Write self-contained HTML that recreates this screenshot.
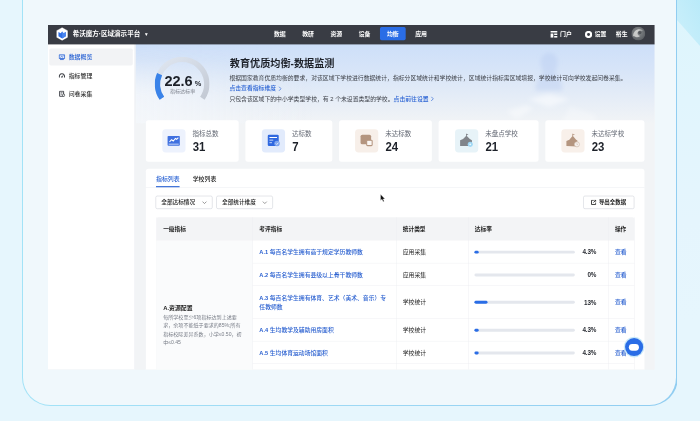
<!DOCTYPE html>
<html lang="zh-CN">
<head>
<meta charset="utf-8">
<title>教育优质均衡-数据监测</title>
<style>
*{box-sizing:border-box;margin:0;padding:0}
html,body{width:700px;height:421px;overflow:hidden}
body{position:relative;background:#e6f6fd;font-family:"Liberation Sans","Noto Sans CJK SC",sans-serif;color:#222}
.frame{position:absolute;left:22.4px;top:-40px;width:655.7px;height:446.1px;border:solid transparent;border-width:0 2px 1.8px 1.5px;border-radius:0 0 28.5px 28.5px;background:linear-gradient(#f0f8fc,#f0f8fc) padding-box,linear-gradient(90deg,#a3e3f7 0,#9dd8f4 50%,#90cdf1 100%) border-box}
.rpanel{position:absolute;left:677px;top:0;width:23px;height:421px;background:linear-gradient(180deg,#ddf5fc 0,#e1f5fd 100px,#e5f5fd 220px,#e6f6fd 320px)}
.rpanel svg{position:absolute;left:0;top:0;width:23px;height:60px}
.app{position:absolute;left:47.6px;top:25px;width:1438px;height:817px;transform:scale(.42181);transform-origin:0 0;background:#f2f4f6;overflow:hidden;font-size:14px}
.topbar{position:absolute;left:0;top:0;width:1440px;height:45.5px;z-index:5;background:#393c44;color:#fff}
.logo{position:absolute;left:16px;top:4px;width:35px;height:35px}
.title{position:absolute;left:58.5px;top:0;line-height:44px;font-size:15.5px;font-weight:700;white-space:nowrap}
.title b{font-size:11px;margin-left:9px;position:relative;top:-1.5px}
.nav{position:absolute;top:5px;height:31px;width:61px;border-radius:4px;text-align:center;line-height:31px;font-weight:700;font-size:14px}
.nav.on{background:#2a6de6}
.tr{position:absolute;top:0;line-height:44px;font-size:14px;font-weight:700;white-space:nowrap}
.side{position:absolute;left:0;top:44px;width:205.5px;height:773px;background:#fff;border-right:1.5px solid #e6eaf1;z-index:2}
.mi{position:absolute;left:3px;width:198px;height:40px;border-radius:4px;line-height:40px;padding-left:46px;font-size:14px;color:#333;font-weight:500}
.mi.on{background:#f2f3f5;color:#2a63d4}
.mi svg{position:absolute;left:22px;top:12px;width:16px;height:16px}
.main{position:absolute;left:208px;top:44px;width:1232px;height:773px;background:#f2f4f6}
.hero{position:absolute;left:0;top:0;width:1232px;height:190px;background:linear-gradient(180deg,#cddff9 0,#d6e4f8 30%,#e4ecf7 65%,#f2f4f6 100%)}
.hero:after{content:"";position:absolute;left:0;top:0;width:420px;height:190px;background:linear-gradient(90deg,rgba(244,247,251,.8),rgba(244,247,251,0));-webkit-mask-image:linear-gradient(180deg,rgba(0,0,0,0) 0,rgba(0,0,0,.1) 20%,#000 65%);mask-image:linear-gradient(180deg,rgba(0,0,0,0) 0,rgba(0,0,0,.1) 20%,#000 65%)}
.gauge{position:absolute;left:45px;top:31px;width:130px;height:130px}
.gnum{position:absolute;left:68px;top:70px;font-size:35.5px;font-weight:700;color:#1d2129;line-height:37.6px;white-space:nowrap;transform:scaleX(.97);transform-origin:0 0}
.gnum small{font-size:18px;margin-left:5px}
.glab{position:absolute;left:81px;top:105px;font-size:12px;color:#80858f;line-height:16px;white-space:nowrap}
h1{position:absolute;left:223px;top:30px;font-size:24px;line-height:34px;font-weight:700;color:#1d2129;white-space:nowrap}
.desc{position:absolute;left:222px;top:70px;font-size:13.85px;line-height:24px;color:#3d4048;white-space:nowrap}
.desc a{color:#2a63d4;font-weight:500}
.card{position:absolute;top:182px;height:98px;background:#fff;border-radius:6px}
.card .ib{position:absolute;left:39px;top:21px;width:55px;height:55px;border-radius:8px}
.card .ib svg{position:absolute;left:0;top:0;width:55px;height:55px}
.card .lb{position:absolute;left:110.5px;top:20px;font-size:15.5px;color:#636873;line-height:22px;white-space:nowrap}
.card .nm{position:absolute;left:110.5px;top:45.5px;font-size:30px;font-weight:700;color:#1d2129;line-height:34px;transform:scaleX(.9);transform-origin:0 0}
.panel{position:absolute;left:24px;top:297px;width:1182px;height:600px;background:#fff;border-radius:6px 6px 0 0}
.tab{position:absolute;top:12px;font-size:14px;line-height:22px;color:#222;font-weight:500}
.tab.on{color:#2a63d4}
.tab.on:after{content:"";position:absolute;left:0;right:0;top:29px;height:2.5px;background:#2a63d4}
.tline{position:absolute;left:0;top:43.5px;width:1182px;height:1px;background:#e8eaee}
.sel{position:absolute;top:63.5px;height:31px;border:1px solid #bfc4cc;border-radius:4px;font-size:13.4px;line-height:29px;padding-left:13px;color:#222;font-weight:500;background:#fff}
.sel svg{position:absolute;right:11px;top:8px;width:14px;height:14px}
.tbl{position:absolute;left:24px;top:115px;width:1135px;height:500px;border-left:1px solid #ebedf0;border-right:1px solid #ebedf0}
.th{position:absolute;left:0;top:0;width:1133px;height:55px;background:#f3f4f6;border-radius:4px 4px 0 0}
.th span{position:absolute;top:1.5px;line-height:54px;font-weight:700;font-size:13.5px;color:#222}
.vl{position:absolute;top:0;width:1px;height:500px;background:#ebedf0}
.hl{position:absolute;left:228px;width:905px;height:1px;background:#ebedf0}
.c1{position:absolute;left:0;top:54px;width:228px;height:446px;background:#fafbfc}
.c{position:absolute;font-size:13.8px;line-height:22px;white-space:nowrap;color:#222}
.lk{color:#2a60d0;font-weight:500}
.lk b{font-weight:700;font-size:13.4px}
.bar{position:absolute;left:754px;width:238px;height:7px;border-radius:3.5px;margin-top:-.5px;background:#e4e7ed}
.bar i{position:absolute;left:0;top:0;height:7px;border-radius:3.5px;background:#2a6de6}
.pct{position:absolute;left:992px;width:51px;text-align:right;font-size:15px;line-height:22px;color:#2b2e35;font-weight:700;letter-spacing:-.3px}
.fab{position:absolute;left:1159.5px;top:698px;width:43px;height:43px;border-radius:50%;background:#2a6de6;box-shadow:0 0 0 3px #c9e9f9}
.fab i{position:absolute;left:9.5px;top:13.5px;width:24px;height:16px;border-radius:8px;background:#fff}
.card.s1>*{margin-left:-1px}
</style>
</head>
<body>
<div class="frame"></div>
<div class="rpanel"><svg viewBox="0 0 23 60"><defs><linearGradient id="rg" x1="0" y1="1" x2="1" y2="0"><stop offset="0" stop-color="#cdf0fb"/><stop offset="1" stop-color="#b9eaf9"/></linearGradient></defs><path d="M0 0H23V46L0 20z" fill="url(#rg)"/></svg></div>

<div class="app">
  <div class="topbar">
    <svg class="logo" viewBox="0 0 30 30"><path d="M15 1.200 26.800 8v14L15 28.800 3.200 22V8z" fill="#fff" stroke="#22252b" stroke-width=".8"/><path d="M7.500 11 12 13.500 15 10l3 3.500L22.500 11v8.500L15 24l-7.500-4.500z" fill="#2f6fe6"/><path d="M15 10l3 3.500L22.500 11v8.500L15 24z" fill="#4a85ee"/></svg>
    <div class="title">希沃魔方·区域演示平台<b>▼</b></div>
    <div class="nav" style="left:519px">数据</div>
    <div class="nav" style="left:586px">教研</div>
    <div class="nav" style="left:653px">资源</div>
    <div class="nav" style="left:720px">设备</div>
    <div class="nav on" style="left:787px">均衡</div>
    <div class="nav" style="left:854px">应用</div>
    <svg style="position:absolute;left:1191px;top:14px;width:17px;height:16px" viewBox="0 0 17 16"><path d="M0 0h17v4H0zM0 6h7v10H0zM9 6h8v4H9zM9 12h8v4H9z" fill="#fff"/></svg>
    <div class="tr" style="left:1214px">门户</div>
    <svg style="position:absolute;left:1273px;top:13.500px;width:17px;height:17px" viewBox="0 0 17 17"><circle cx="8.5" cy="8.5" r="6" fill="none" stroke="#fff" stroke-width="5"/></svg>
    <div class="tr" style="left:1296px">设置</div>
    <div class="tr" style="left:1346px">裕生</div>
    <svg style="position:absolute;left:1383px;top:3.500px;width:33px;height:33px" viewBox="0 0 33 33"><defs><radialGradient id="av" cx=".45" cy=".4" r=".75"><stop offset="0" stop-color="#8c8f91"/><stop offset=".6" stop-color="#686c70"/><stop offset="1" stop-color="#4d5156"/></radialGradient></defs><circle cx="16.500" cy="16.500" r="16.500" fill="url(#av)"/><path d="M4 21c1-9 7-15 15-15 4 0 7 2 8 4-5-2-10-1-12 3s1 8 6 9c-4 3-9 4-12 2s-5-1-5-3z" fill="#e8e8e6" opacity=".7"/><circle cx="20" cy="14" r="4" fill="#3f4347" opacity=".7"/></svg>
  </div>

  <div class="side">
    <div class="mi on" style="top:12px"><svg viewBox="0 0 16 16"><path d="M1.500 2.800h13v8.700h-13z" fill="#dfe8fb" stroke="#2a63d4" stroke-width="2"/><path d="M3.500 14h9" stroke="#2a63d4" stroke-width="2"/><path d="M4.500 8.800l2.500-2.300 2 1.500 2.500-2.500" fill="none" stroke="#2a63d4" stroke-width="1.700"/></svg>数据概览</div>
    <div class="mi" style="top:55.5px"><svg viewBox="0 0 16 16"><path d="M2.200 12.500a6.300 6.300 0 1 1 11.600 0" fill="none" stroke="#3c3f45" stroke-width="2.600"/><path d="M8 11.500l2.500-4" stroke="#3c3f45" stroke-width="2"/><circle cx="8" cy="11.500" r="1.800" fill="#3c3f45"/></svg>指标管理</div>
    <div class="mi" style="top:98.5px"><svg viewBox="0 0 16 16"><path d="M2.500 2h9.500v12h-9.500z" fill="none" stroke="#3c3f45" stroke-width="2.200"/><path d="M5 5.700h4.500M5 9h3" stroke="#3c3f45" stroke-width="1.800"/><circle cx="12" cy="11.500" r="2.800" fill="#fff" stroke="#3c3f45" stroke-width="1.800"/></svg>问卷采集</div>
  </div>

  <div class="main">
    <div class="hero"><svg style="position:absolute;left:0;top:0;width:1232px;height:190px" viewBox="0 0 1232 190"><defs><filter id="bl" x="-20%" y="-20%" width="140%" height="140%"><feGaussianBlur stdDeviation="5"/></filter></defs><g filter="url(#bl)"><path d="M980 22c14 0 22 12 20 28l-6 22c12 8 18 22 18 40h-64c0-18 6-32 18-40l-6-22c-2-16 6-28 20-28z" fill="#b4c9ee" opacity=".38"/><path d="M930 132l50-12 48 12-48 18z" fill="#fff" opacity=".5"/><path d="M880 160l46-14 16 8-40 24z" fill="#fff" opacity=".4"/><path d="M1030 150l60 20v18h-80z" fill="#fff" opacity=".25"/></g></svg></div>
    <svg class="gauge" viewBox="0 0 130 130">
      <defs><linearGradient id="tg" x1="0" y1="0" x2="1" y2="1"><stop offset="0" stop-color="#dfe6f0"/><stop offset=".45" stop-color="#d3dae5"/><stop offset="1" stop-color="#c3c9d3"/></linearGradient></defs><path d="M17.08 98.55A58.5 58.5 0 1 1 112.92 98.55" fill="none" stroke="url(#tg)" stroke-width="13"/>
      <path d="M17.08 98.55A58.5 58.5 0 0 1 11.56 41.21" fill="none" stroke="#3a83e9" stroke-width="13"/>
    </svg>
    <div class="gnum">22.6<small>%</small></div>
    <div class="glab">指标达标率</div>
    <h1>教育优质均衡-数据监测</h1>
    <div class="desc">根据国家教育优质均衡的要求，对该区域下学校进行数据统计，指标分区域统计和学校统计，区域统计指标需区域填报，学校统计可向学校发起问卷采集。<br><a>点击查看指标维度<svg style="display:inline-block;width:8px;height:12px;margin-left:5px;vertical-align:-1.5px" viewBox="0 0 8 12"><path d="M1.500 1l5 5-5 5" fill="none" stroke="#2a63d4" stroke-width="1.600"/></svg></a><br>只包含该区域下的中小学类型学校，有 2 个未设置类型的学校。<a>点击前往设置<svg style="display:inline-block;width:8px;height:12px;margin-left:5px;vertical-align:-1.5px" viewBox="0 0 8 12"><path d="M1.500 1l5 5-5 5" fill="none" stroke="#2a63d4" stroke-width="1.600"/></svg></a></div>

    <div class="card" style="left:24px;width:220px"><div class="ib" style="background:#edf2fd"><svg viewBox="0 0 55 55"><rect x="12.500" y="16" width="29" height="23" rx="2" fill="#3f70e0"/><path d="M17 30l5-5 4 3 5-6 3 2 4-4" fill="none" stroke="#fff" stroke-width="2.500"/><path d="M15 35.500h24" stroke="#dfe8fb" stroke-width="2"/></svg></div><div class="lb">指标总数</div><div class="nm">31</div></div>
    <div class="card" style="left:260px;width:206px"><div class="ib" style="background:#e2ebfc"><svg viewBox="0 0 55 55"><rect x="14" y="13" width="26" height="27" rx="3" fill="#2f68e0"/><path d="M18 19.500h18" stroke="#fff" stroke-width="2.500"/><path d="M18 26h9M18 32h6" stroke="#dfe8fb" stroke-width="2"/><circle cx="36" cy="34" r="6.500" fill="#7fa6ef"/><path d="M33 34l2.300 2.300 4-4.300" fill="none" stroke="#fff" stroke-width="1.800"/></svg></div><div class="lb">达标数</div><div class="nm">7</div></div>
    <div class="card s1" style="left:482px;width:220px"><div class="ib" style="background:#f7efe9"><svg viewBox="0 0 55 55"><rect x="13" y="13" width="25" height="23" rx="4" fill="#b4957f"/><rect x="27.500" y="26" width="13" height="13" rx="2" fill="#fbf7f4" stroke="#b4957f" stroke-width="2.500"/></svg></div><div class="lb">未达标数</div><div class="nm">24</div></div>
    <div class="card" style="left:718px;width:237px"><div class="ib" style="background:#e7f3f8"><svg viewBox="0 0 55 55"><path d="M12 40V26l7-3 7-7V11h2v1h3v2h-3v2l7 7 5 3v14z" fill="#80848a"/><circle cx="36" cy="36" r="6" fill="#9ed7f4"/><circle cx="36" cy="36" r="2.200" fill="#eaf7fd"/></svg></div><div class="lb">未盘点学校</div><div class="nm">21</div></div>
    <div class="card s1" style="left:971px;width:235px"><div class="ib" style="background:#f8f0ea"><svg viewBox="0 0 55 55"><path d="M12 40V28l7-3 7-8V11h2v1h3v2h-3v3l7 8 3 2v14z" fill="#b4957f"/><circle cx="37" cy="36" r="6" fill="#f6f1ee" stroke="#cdb9ab" stroke-width="1.500"/><path d="M37 33v3.500h2.500" stroke="#cdb9ab" stroke-width="1.300" fill="none"/></svg></div><div class="lb">未达标学校</div><div class="nm">23</div></div>

    <div class="panel">
      <div class="tab on" style="left:24px">指标列表</div>
      <div class="tab" style="left:111px">学校列表</div>
      <div class="tline"></div>
      <div class="sel" style="left:22.5px;width:135px">全部达标情况<svg viewBox="0 0 12 12"><path d="M2 4l4 4 4-4" fill="none" stroke="#777" stroke-width="1.500"/></svg></div>
      <div class="sel" style="left:166.5px;width:134px">全部统计维度<svg viewBox="0 0 12 12"><path d="M2 4l4 4 4-4" fill="none" stroke="#777" stroke-width="1.500"/></svg></div>
      <div class="sel" style="left:1037px;width:121px;padding-left:36px;font-weight:700;font-size:13px"><svg style="left:17px;right:auto;top:8px;width:13px;height:13px" viewBox="0 0 13 13"><path d="M7 1.500H1.500v10h10V7" fill="none" stroke="#222" stroke-width="2"/><path d="M6 7l5.500-5.500M8 1.200h3.800V5" fill="none" stroke="#222" stroke-width="2"/></svg>导出全数据</div>

      <div class="tbl">
        <div class="c1"></div>
        <div class="th"><span style="left:16px">一级指标</span><span style="left:244px">考评指标</span><span style="left:584px">统计类型</span><span style="left:755px">达标率</span><span style="left:1087px">操作</span></div>
        <div class="vl" style="left:228px"></div><div class="vl" style="left:568px"></div><div class="vl" style="left:739px"></div><div class="vl" style="left:1071px"></div>
        <div class="hl" style="top:108px"></div><div class="hl" style="top:161px"></div><div class="hl" style="top:239px"></div><div class="hl" style="top:293px"></div><div class="hl" style="top:346px"></div>

        <div class="c" style="left:16px;top:203.5px;font-weight:700;font-size:14px">A.资源配置</div>
        <div class="c" style="left:16px;top:226.5px;font-size:12px;line-height:20px;color:#787d87">每所学校至少6项指标达到上述要<br>求，余项不能低于要求的85%;所有<br>指标校际差异系数，小学≤0.50，初<br>中≤0.45</div>

        <div class="c lk" style="left:244px;top:71.5px"><b>A.1</b> 每百名学生拥有高于规定学历教师数</div>
        <div class="c" style="left:584px;top:71.5px">应用采集</div>
        <div class="bar" style="top:79.5px"><i style="width:10px"></i></div><div class="pct" style="top:71.5px">4.3%</div>
        <div class="c lk" style="left:1087px;top:71.5px">查看</div>

        <div class="c lk" style="left:244px;top:125.5px"><b>A.2</b> 每百名学生拥有县级以上骨干教师数</div>
        <div class="c" style="left:584px;top:125.5px">应用采集</div>
        <div class="bar" style="top:133.5px"></div><div class="pct" style="top:125.5px">0%</div>
        <div class="c lk" style="left:1087px;top:125.5px">查看</div>

        <div class="c lk" style="left:244px;top:179.5px"><b>A.3</b> 每百名学生拥有体育、艺术（美术、音乐）专<br>任教师数</div>
        <div class="c" style="left:584px;top:190.5px">学校统计</div>
        <div class="bar" style="top:198.5px"><i style="width:31px"></i></div><div class="pct" style="top:190.5px">13%</div>
        <div class="c lk" style="left:1087px;top:190.5px">查看</div>

        <div class="c lk" style="left:244px;top:256.5px"><b>A.4</b> 生均教学及辅助用房面积</div>
        <div class="c" style="left:584px;top:256.5px">学校统计</div>
        <div class="bar" style="top:264.5px"><i style="width:10px"></i></div><div class="pct" style="top:256.5px">4.3%</div>
        <div class="c lk" style="left:1087px;top:256.5px">查看</div>

        <div class="c lk" style="left:244px;top:310.5px"><b>A.5</b> 生均体育运动场馆面积</div>
        <div class="c" style="left:584px;top:310.5px">学校统计</div>
        <div class="bar" style="top:318.5px"><i style="width:10px"></i></div><div class="pct" style="top:310.5px">4.3%</div>
        <div class="c lk" style="left:1087px;top:310.5px">查看</div>
      </div>
    </div>
    <div class="fab"><i></i></div>
  </div>
</div>
<svg style="position:absolute;left:379px;top:193px;width:8px;height:10px" viewBox="0 0 8 10"><path d="M1.500 1.200V7.600L3 6.300 4.100 8.800 5.200 8.300 4.100 5.900H6z" fill="#111" stroke="#fff" stroke-width=".35"/></svg>
</body>
</html>
